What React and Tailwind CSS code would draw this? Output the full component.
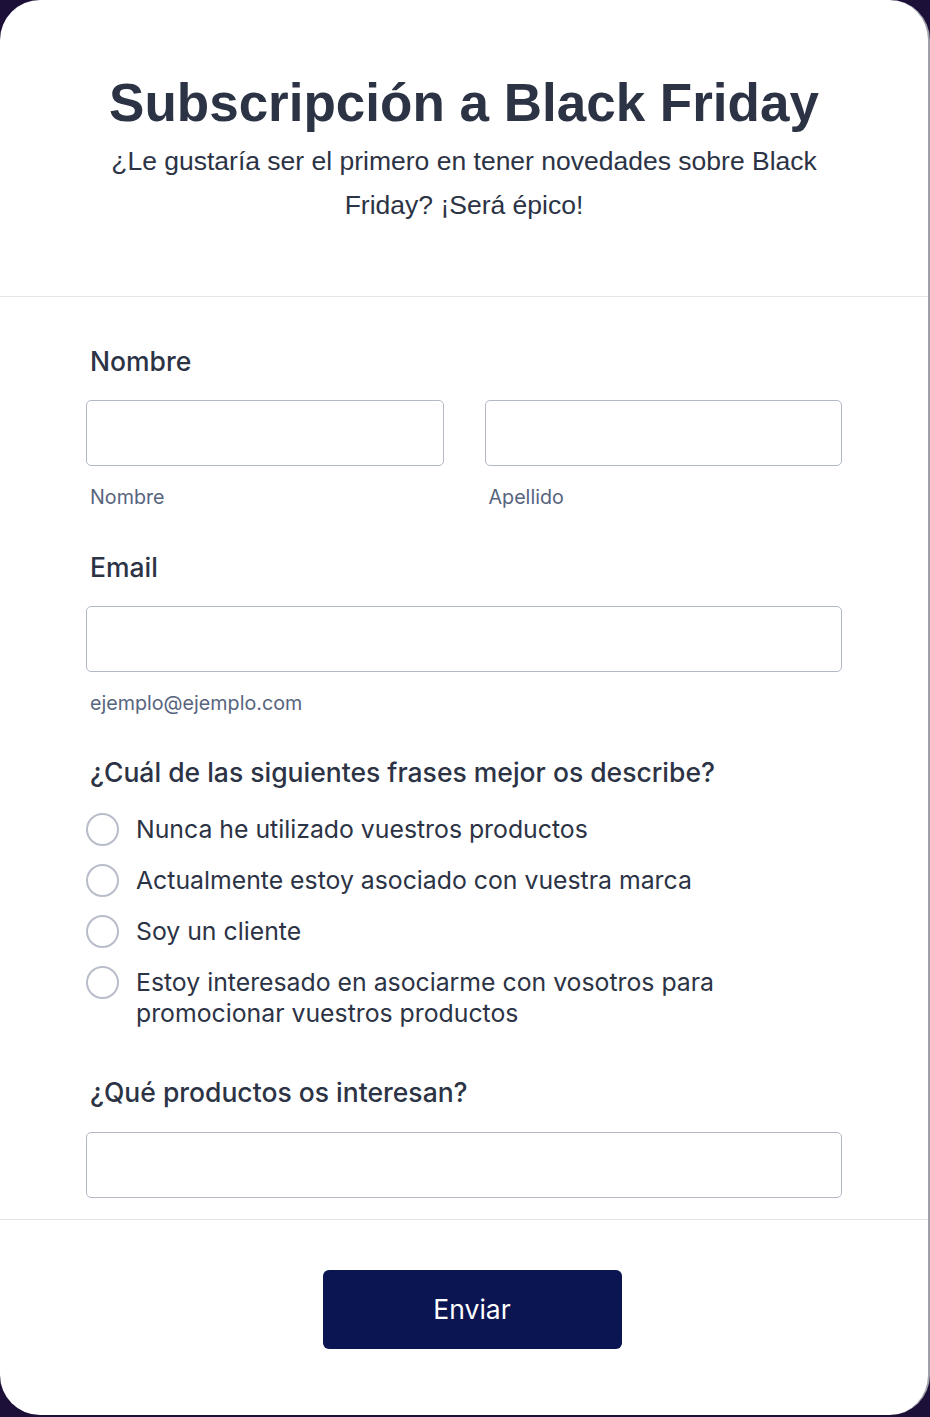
export default function App() {
  const options = [
    'Nunca he utilizado vuestros productos',
    'Actualmente estoy asociado con vuestra marca',
    'Soy un cliente',
    'Estoy interesado en asociarme con vosotros para promocionar vuestros productos',
  ]

  return (
    <div className="min-h-screen bg-[#1c1039] pb-[2px]">
      <div className="bg-white rounded-[40px] h-[1415px] border-r-2 border-[#9ea1a9] flex flex-col font-['Inter',sans-serif]">
        <header className="pt-[68px] pb-[69px] px-[86px] text-center font-['Liberation_Sans',Arial,sans-serif] text-[#2c3345]">
          <h1 className="text-[53px] leading-[70px] font-bold">Subscripción a Black Friday</h1>
          <p className="text-[26.5px] leading-[44px] mt-[1px]">
            ¿Le gustaría ser el primero en tener novedades sobre Black Friday? ¡Será épico!
          </p>
        </header>

        <form className="border-t border-b border-[#e3e5ea] pt-[48px] pb-[21px] px-[86px] text-[#2c3345]">
          <label className="block text-[26.5px] leading-[32px] font-medium px-[4px]">Nombre</label>
          <div className="grid grid-cols-2 gap-[41px] mt-[23px]">
            <div>
              <input className="w-full h-[66px] border border-[#b4b9c6] rounded-[5px]" />
              <p className="mt-[19px] text-[19.7px] leading-[24px] text-[#57647e] px-[4px]">Nombre</p>
            </div>
            <div>
              <input className="w-full h-[66px] border border-[#b4b9c6] rounded-[5px]" />
              <p className="mt-[19px] text-[19.7px] leading-[24px] text-[#57647e] px-[4px]">Apellido</p>
            </div>
          </div>

          <label className="block mt-[42px] text-[26.5px] leading-[32px] font-medium px-[4px]">Email</label>
          <input className="mt-[23px] w-full h-[66px] border border-[#b4b9c6] rounded-[5px]" />
          <p className="mt-[19px] text-[19.7px] leading-[24px] text-[#57647e] px-[4px]">ejemplo@ejemplo.com</p>

          <p className="mt-[41px] text-[26.5px] leading-[32px] font-medium px-[4px]">
            ¿Cuál de las siguientes frases mejor os describe?
          </p>
          <div className="mt-[26px] flex flex-col gap-[20px] pr-[110px]">
            {options.map((o) => (
              <label key={o} className="flex items-start gap-[17px]">
                <span className="shrink-0 h-[31px] flex items-center">
                  <span className="w-[33px] h-[33px] rounded-full border-2 border-[#b8bdc9]" />
                </span>
                <span className="text-[24.8px] leading-[31px]">{o}</span>
              </label>
            ))}
          </div>

          <p className="mt-[47px] text-[26.5px] leading-[32px] font-medium px-[4px]">¿Qué productos os interesan?</p>
          <input className="mt-[24px] w-full h-[66px] border border-[#b4b9c6] rounded-[5px]" />
        </form>

        <div className="flex justify-center pt-[50px]">
          <button className="w-[299px] h-[79px] bg-[#0b1551] text-white text-[26.5px] rounded-[6px] ml-[16px]">
            Enviar
          </button>
        </div>
      </div>
    </div>
  )
}
